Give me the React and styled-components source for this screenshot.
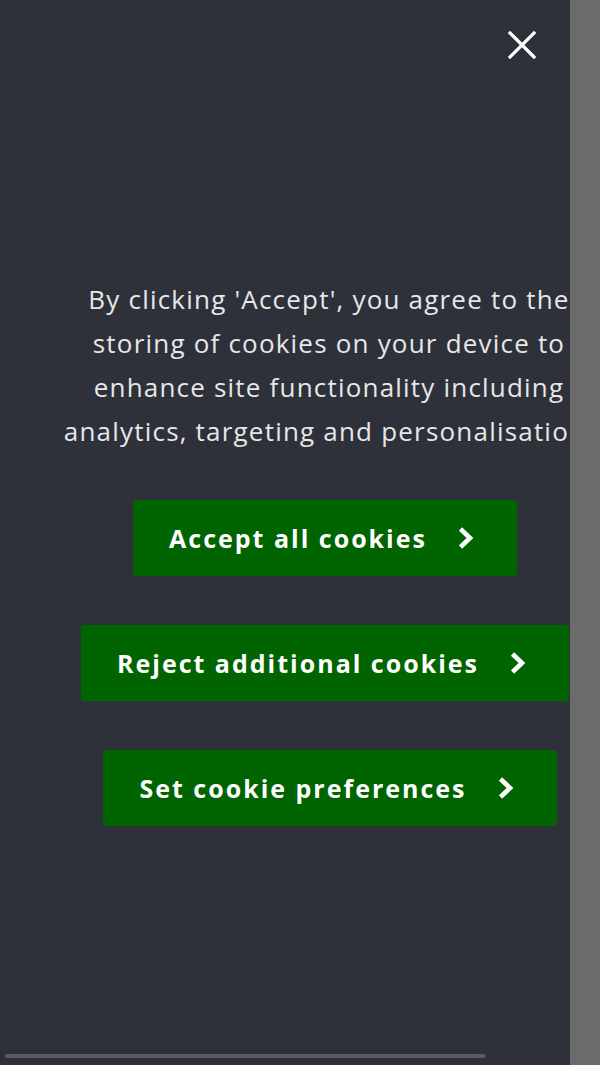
import React from "react";
import styled, { createGlobalStyle } from "styled-components";

const GlobalStyle = createGlobalStyle`
    html, body {
        margin: 0;
        padding: 0;
        background: #2e3139;
    }
    body {
        font-family: "Open Sans", "Noto Sans", sans-serif;
    }
`
const Page = styled.div`
    display: flex;
    width: 600px;
    height: 1065px;
    overflow: hidden;
`
const Panel = styled.div`
    width: 570px;
    height: 100%;
    background-color: #2e3139;
    overflow: hidden;
    display: flex;
    flex-direction: column;
    position: relative;
`
const Strip = styled.div`
    width: 30px;
    height: 100%;
    background-color: #6b6b6b;
`
const TopBar = styled.div`
    display: flex;
    justify-content: flex-end;
    padding: 30px 33px 0 0;
    height: 60px;
    box-sizing: border-box;
`
const CloseButton = styled.button`
    background: none;
    border: none;
    padding: 0;
    width: 30px;
    height: 30px;
    display: flex;
    align-items: center;
    justify-content: center;
    cursor: pointer;
`
const Content = styled.div`
    width: 658px;
    flex-shrink: 0;
    display: flex;
    flex-direction: column;
    align-items: center;
`
const Message = styled.p`
    margin: 217px 0 0 0;
    color: #e6e7e8;
    font-size: 26px;
    line-height: 44px;
    text-align: center;
    letter-spacing: 1.2px;
    white-space: nowrap;
`
const Buttons = styled.div`
    display: flex;
    flex-direction: column;
    align-items: center;
    gap: 49px;
    margin-top: 47px;
`
const GreenButton = styled.button`
    height: 76px;
    display: flex;
    align-items: center;
    padding: 0 42px 0 36px;
    background-color: #006400;
    border: none;
    border-radius: 3px;
    color: #ffffff;
    font-family: "Open Sans", "Noto Sans", sans-serif;
    font-weight: 700;
    font-size: 25px;
    letter-spacing: 2px;
    white-space: nowrap;
    margin-left: ${props => props.shift || 0}px;
    margin-right: ${props => -(props.shift || 0)}px;
    cursor: pointer;
`
const Chevron = styled.svg`
    margin-left: 30px;
    width: 18px;
    height: 24px;
`
const HScroll = styled.div`
    position: absolute;
    left: 5px;
    bottom: 7px;
    width: 481px;
    height: 4px;
    border-radius: 2px;
    background-color: #585b60;
`

function Arrow() {
    return (
        <Chevron viewBox="0 0 18 24">
            <path d="M3.5 3 L13 12 L3.5 21" fill="none" stroke="#fff" strokeWidth="4.6" strokeLinejoin="miter" />
        </Chevron>
    )
}

export default function App() {
    return (
        <Page>
            <GlobalStyle />
            <Panel>
                <TopBar>
                    <CloseButton aria-label="Close">
                        <svg width="28" height="28" viewBox="0 0 28 28">
                            <path d="M2 2 L26 26 M26 2 L2 26" stroke="#fff" strokeWidth="3.2" strokeLinecap="square" />
                        </svg>
                    </CloseButton>
                </TopBar>
                <Content>
                    <Message>
                        By clicking 'Accept', you agree to the<br />
                        storing of cookies on your device to<br />
                        enhance site functionality including<br />
                        analytics, targeting and personalisation.
                    </Message>
                    <Buttons>
                        <GreenButton shift={-4}>Accept all cookies<Arrow /></GreenButton>
                        <GreenButton shift={-4}>Reject additional cookies<Arrow /></GreenButton>
                        <GreenButton shift={1}>Set cookie preferences<Arrow /></GreenButton>
                    </Buttons>
                </Content>
                <HScroll />
            </Panel>
            <Strip />
        </Page>
    )
}
